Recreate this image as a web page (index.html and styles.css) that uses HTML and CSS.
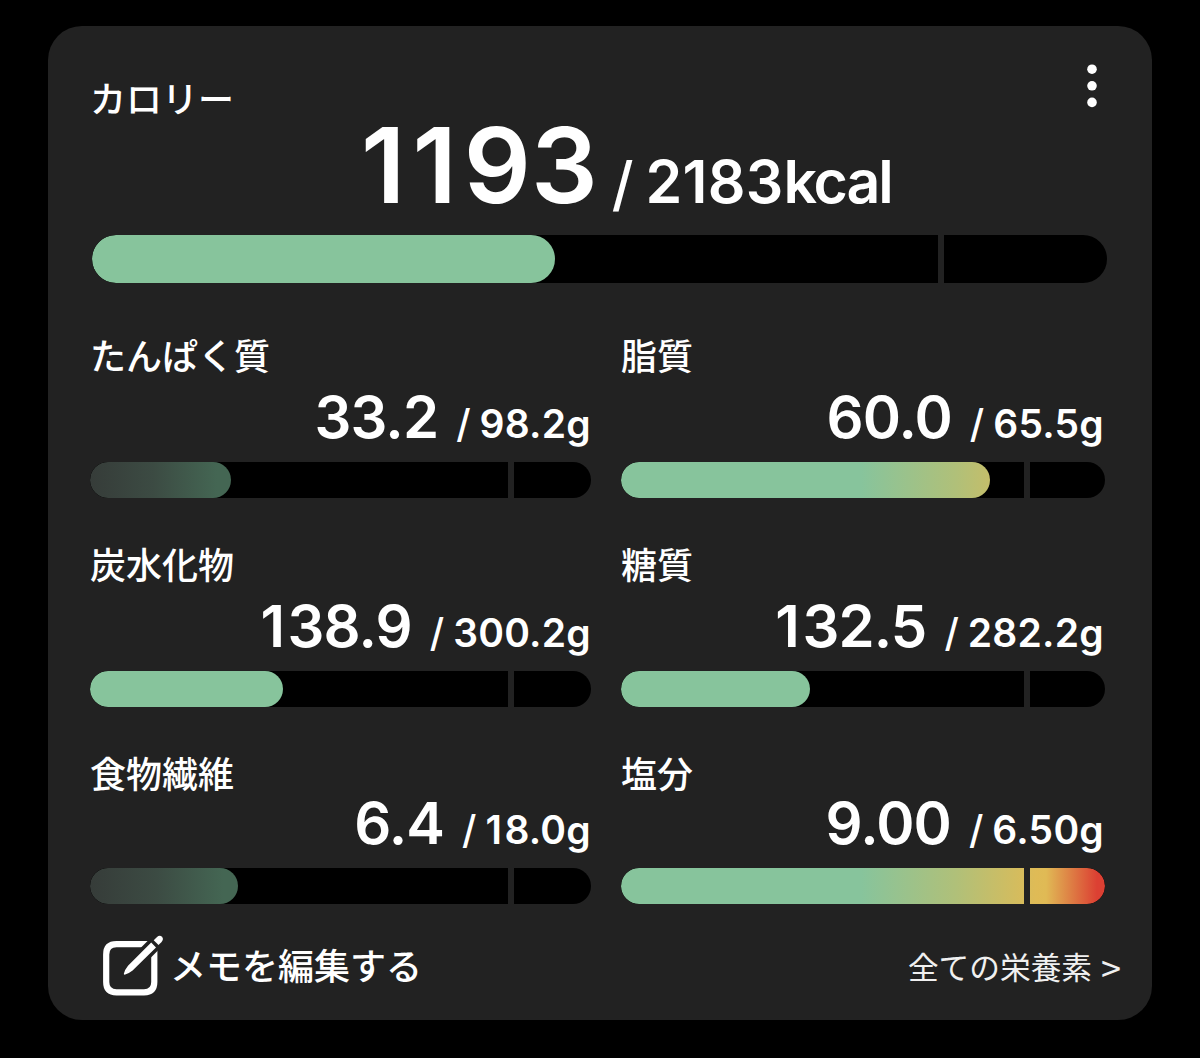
FILE: index.html
```html
<!DOCTYPE html>
<html lang="ja">
<head>
<meta charset="utf-8">
<title>カロリー</title>
<link rel="stylesheet" href="styles.css">
</head>
<body>
<main class="card">
  <header class="head">
    <h1 class="label">カロリー</h1>
    <svg class="menu" width="12" height="44" viewBox="0 0 12 44"><circle cx="6" cy="5.2" r="4.8"/><circle cx="6" cy="21.8" r="4.8"/><circle cx="6" cy="38.4" r="4.8"/></svg>
  </header>
  <p class="total"><span class="total-now"><span class="ones">11</span>93</span><span class="total-slash">/</span><span class="total-goal">2183<span class="unit">kcal</span></span></p>
  <div class="bar bar-total"><div class="fill good" style="width:462.5px"></div><i class="mark"></i></div>

  <section class="grid">
    <article class="item">
      <h2 class="label">たんぱく質</h2>
      <p class="amount"><span class="now">33.2</span><span class="slash">/</span><span class="goal">98.2g</span></p>
      <div class="bar"><div class="fill low" style="width:141px"></div><i class="mark"></i></div>
    </article>
    <article class="item right">
      <h2 class="label">脂質</h2>
      <p class="amount"><span class="now">60.0</span><span class="slash">/</span><span class="goal">65.5g</span></p>
      <div class="bar"><div class="fill scale" style="width:369px"></div><i class="mark"></i></div>
    </article>
    <article class="item">
      <h2 class="label">炭水化物</h2>
      <p class="amount"><span class="now"><span class="one">1</span>38.9</span><span class="slash">/</span><span class="goal">300.2g</span></p>
      <div class="bar"><div class="fill good" style="width:193px"></div><i class="mark"></i></div>
    </article>
    <article class="item right">
      <h2 class="label">糖質</h2>
      <p class="amount"><span class="now"><span class="one">1</span>32.5</span><span class="slash">/</span><span class="goal">282.2g</span></p>
      <div class="bar"><div class="fill good" style="width:189px"></div><i class="mark"></i></div>
    </article>
    <article class="item compact">
      <h2 class="label">食物繊維</h2>
      <p class="amount"><span class="now">6.4</span><span class="slash">/</span><span class="goal"><span class="one">1</span>8.0g</span></p>
      <div class="bar"><div class="fill low" style="width:148px"></div><i class="mark"></i></div>
    </article>
    <article class="item compact right">
      <h2 class="label">塩分</h2>
      <p class="amount"><span class="now">9.00</span><span class="slash">/</span><span class="goal">6.50g</span></p>
      <div class="bar"><div class="fill scale" style="width:484px"></div><i class="mark"></i></div>
    </article>
  </section>

  <footer class="foot">
    <a class="memo">
      <svg class="edit" width="62" height="62" viewBox="0 0 62 62">
        <path class="frame" d="M48 9.2H13.5Q3.2 9.2 3.2 19.5V47Q3.2 57.3 13.5 57.3H41Q51.3 57.3 51.3 47V14"/>
        <path class="gap" d="M30 30.5L60 .5"/>
        <path class="pen" d="M48.2 7.6L53 12.4 29.6 35.6Q26 38.6 21.6 39.8Q20.5 39.6 20.9 38.5Q22 34.5 25 30.8Z"/>
        <path class="pen" d="M50.7 5.3L53.8 2.2Q56.5-.2 59 1.7Q61 4.2 58.6 6.9L55.5 10Z"/>
      </svg>
      <span>メモを編集する</span>
    </a>
    <a class="all">全ての栄養素<span class="chev">&gt;</span></a>
  </footer>
</main>
</body>
</html>
```
FILE: styles.css
```css
* { box-sizing: border-box; margin: 0; padding: 0; }

body {
  background: #000;
  color: #fff;
  font-family: Inter, "Noto Sans CJK JP", sans-serif;
  padding: 26px 48px 0;
}

.card {
  width: 1104px;
  height: 994px;
  padding: 38px 31px 0 42px;
  border-radius: 34px;
  background: #222;
}

.head {
  display: flex;
  justify-content: space-between;
  height: 51px;
  padding-right: 23px;
}

.head .label { margin-top: 15px; }
.menu { fill: #fff; }

.label {
  height: 36px;
  font: 500 36px/36px "Noto Sans CJK JP", sans-serif;
  white-space: nowrap;
}

.total, .amount {
  display: flex;
  align-items: baseline;
  font-weight: 600;
  white-space: nowrap;
}

.total { height: 120px; padding-left: 271px; line-height: 100px; }
.total-now { font-size: 105px; }
.ones { letter-spacing: 7px; }
.total-slash { position: relative; top: 2px; font-size: 59px; font-weight: 500; margin-left: 14px; }
.total-goal { font-size: 59px; letter-spacing: .2px; margin-left: 12px; }
.unit { letter-spacing: -2.1px; }

.bar {
  position: relative;
  height: 36px;
  border-radius: 18px;
  background: #000;
  overflow: hidden;
}

.bar-total {
  width: 1015px;
  height: 48px;
  margin-left: 2.4px;
  border-radius: 24px;
}

.fill { height: 100%; border-radius: inherit; }
.good { background: #87c49c; }
.low { background: linear-gradient(90deg, #363c39, #3c4b43 45%, #446653 90%); }
.scale { background: linear-gradient(90deg, #87c49c 240px, #b0c079 335px, #dfbb56 415px, #e0ba55 425px, #dc4033 476px) 0 0 / 484px 100%; }

/* Goal marker cut into the track */
.mark {
  position: absolute;
  top: 0;
  left: 83.35%;
  width: 6px;
  height: 100%;
  background: #222;
}

.grid {
  display: grid;
  grid-template-columns: 501px 484px;
  grid-template-rows: 209px 209px 197px;
  column-gap: 30px;
  margin-top: 53px;
}

.amount {
  height: 90px;
  justify-content: flex-end;
  padding-top: 15px;
  line-height: 60px;
}
.compact .amount { height: 78px; padding-top: 3px; }
.right .amount { padding-right: 1px; }

.now { font-size: 58px; letter-spacing: -.9px; }
.now .one { letter-spacing: 2.6px; }
.slash { font-size: 39px; font-weight: 500; margin-left: 18px; }
.goal { font-size: 39px; letter-spacing: .25px; margin-left: 9px; }
.goal .one { letter-spacing: 2.4px; }

.foot {
  display: flex;
  justify-content: space-between;
  padding-left: 13px;
  margin-top: -16px;
  font-family: "Noto Sans CJK JP", sans-serif;
}

.memo {
  display: flex;
  gap: 5px;
  font-size: 36px;
  font-weight: 500;
  line-height: 58px;
}
.edit { overflow: visible; }
.frame { fill: none; stroke: #fff; stroke-width: 6.2; }
.gap { stroke: #222; stroke-width: 14; }
.pen { fill: #fff; }

.all { font-size: 30.7px; line-height: 62px; color: #f0f0f0; font-weight: 400; }
.chev { margin-left: 9px; font-size: 36px; line-height: 1; vertical-align: -3px; }
```
